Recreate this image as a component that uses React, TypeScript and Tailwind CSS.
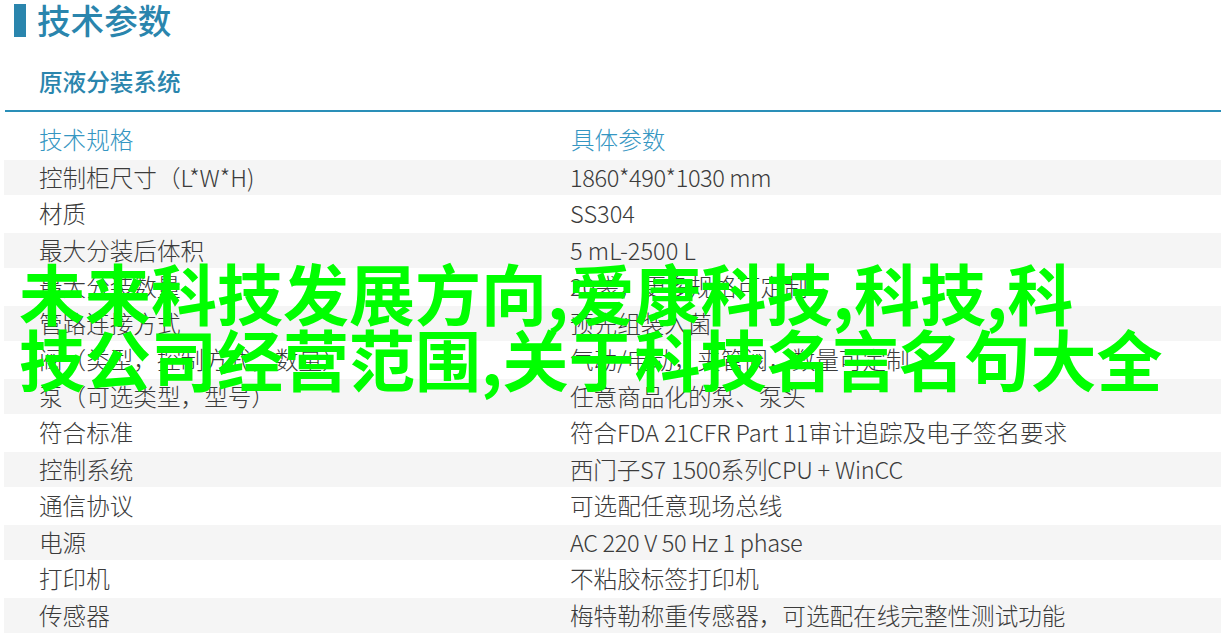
const rows = [
  { name: "控制柜尺寸（L*W*H)", value: "1860*490*1030 mm", tight: "tracking-[-0.4px]" },
  { name: "材质", value: "SS304", tight: "" },
  { name: "最大分装后体积", value: "5 mL-2500 L", tight: "" },
  { name: "最大分装数量", value: "20袋，更多规格可定制", tight: "" },
  { name: "管路连接方式", value: "预先组装入菌", tight: "" },
  { name: "阀（类型，控制方式，数量）", value: "气动/电动，夹管阀，数量可定制", tight: "" },
  { name: "泵（可选类型，型号）", value: "任意商品化的泵、泵头", tight: "" },
  { name: "符合标准", value: "符合FDA 21CFR Part 11审计追踪及电子签名要求", tight: "tracking-[-0.08px]" },
  { name: "控制系统", value: "西门子S7 1500系列CPU + WinCC", tight: "tracking-[-0.22px]" },
  { name: "通信协议", value: "可选配任意现场总线", tight: "" },
  { name: "电源", value: "AC 220 V 50 Hz 1 phase", tight: "tracking-[-0.36px]" },
  { name: "打印机", value: "不粘胶标签打印机", tight: "" },
  { name: "传感器", value: "梅特勒称重传感器，可选配在线完整性测试功能", tight: "" },
];

export default function App() {
  return (
    <div className="relative h-[641px] w-[1225px] overflow-hidden bg-white font-['Noto_Sans_CJK_SC',sans-serif]">
      <div className="flex h-[40px] items-center gap-[11px] pl-[14px]">
        <div className="h-[33px] w-[12px] bg-[#2a85ad]" />
        <h1 className="text-[33.6px] font-medium leading-[40px] text-[#2a85ad]">技术参数</h1>
      </div>

      <h2 className="mt-[24px] pl-[39px] text-[23.6px] font-medium leading-[34px] text-[#2a85ad]">原液分装系统</h2>

      <div className="mx-[5px] mt-[12px] h-[2px] w-[1216px] bg-[#2a8fb8]" />

      <div className="ml-[4px] w-[1217px] text-[23.6px] font-light text-[#3b3b3b]">
        <div className="flex h-[48px] items-center pl-[35px] pt-[6px] leading-[34px] text-[#3596c2]">
          <span className="w-[532px]">技术规格</span>
          <span>具体参数</span>
        </div>
        {rows.map((row, i) => (
          <div
            key={row.name}
            className={
              i % 2 === 0
                ? "flex h-[35px] items-center bg-[#f5f5f5] pl-[35px]"
                : "flex h-[38px] items-center pl-[35px]"
            }
          >
            <span className="w-[531px]">{row.name}</span>
            <span className={row.tight}>{row.value}</span>
          </div>
        ))}
      </div>

      <div className="absolute left-[19px] top-[258px] whitespace-nowrap text-[66px] font-bold leading-[66px] text-[#00ff00]">
        未来科技发展方向,爱康科技,科技,科
        <br />
        技公司经营范围,关于科技名言名句大全
      </div>
    </div>
  );
}
